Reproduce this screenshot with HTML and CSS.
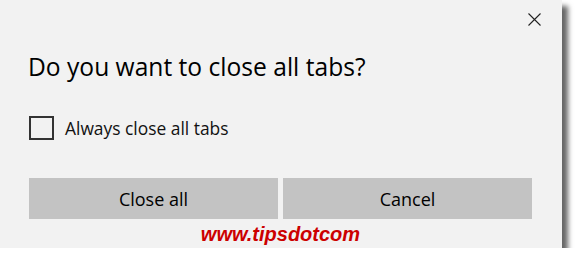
FILE: index.html
```html
<!DOCTYPE html>
<html lang="en">
<head>
    <meta charset="UTF-8">
    <title>Close all tabs</title>
    <link rel="stylesheet" href="styles.css">
</head>
<body>
    <div class="dialog">
        <div class="dialog-top">
            <button class="close-btn" aria-label="Close">
                <svg width="13" height="13" viewBox="0 0 13 13">
                    <path d="M0.5 0.5 L12.5 12.5 M12.5 0.5 L0.5 12.5" stroke="#222" stroke-width="1.1" fill="none"/>
                </svg>
            </button>
        </div>
        <div class="dialog-body">
            <h1 class="title">Do you want to close all tabs?</h1>

            <label class="check-row">
                <input type="checkbox">
                <span class="box"></span>
                Always close all tabs
            </label>

            <div class="buttons">
                <button class="btn">Close all</button>
                <button class="btn">Cancel</button>
            </div>

            <div class="watermark">www.tipsdotcom</div>
        </div>
    </div>
</body>
</html>
```

FILE: styles.css
```css
body {
    margin: 0;
    background: #ffffff;
    font-family: 'Open Sans', 'Noto Sans', sans-serif;
}

.dialog {
    width: 562px;
    height: 248px;
    background: #f2f2f2;
    box-shadow: 6px 6px 5px rgba(0,0,0,0.6);
}

.dialog-top {
    height: 52px;
    box-sizing: border-box;
    padding: 13px 21px 0 0;
    display: flex;
    justify-content: flex-end;
    align-items: flex-start;
}

.close-btn {
    background: none;
    border: none;
    padding: 0;
    width: 13px;
    height: 13px;
    display: block;
}

.close-btn svg {
    display: block;
}

.dialog-body {
    padding: 0 30px 0 29px;
}

.title {
    margin: 0 0 0 -1px;
    font-size: 24.6px;
    line-height: 30px;
    font-weight: 400;
    color: #000;
}

.check-row {
    margin-top: 34px;
    height: 24px;
    display: flex;
    align-items: center;
    gap: 11px;
    font-size: 17.4px;
    color: #111;
}

.check-row input {
    display: none;
}

.check-row .box {
    width: 25px;
    height: 24px;
    box-sizing: border-box;
    border: 2.5px solid #333;
}

.buttons {
    margin-top: 38px;
    display: grid;
    grid-template-columns: 249px 249px;
    gap: 5px;
}

.btn {
    height: 41px;
    border: none;
    background: #c3c3c3;
    font-family: 'Open Sans', 'Noto Sans', sans-serif;
    font-size: 18px;
    color: #000;
    padding: 0;
}

.watermark {
    margin-top: 5px;
    text-align: center;
    font-family: 'Liberation Sans', Arial, sans-serif;
    font-size: 20px;
    line-height: 20px;
    font-weight: bold;
    font-style: italic;
    color: #cc0000;
}
```
